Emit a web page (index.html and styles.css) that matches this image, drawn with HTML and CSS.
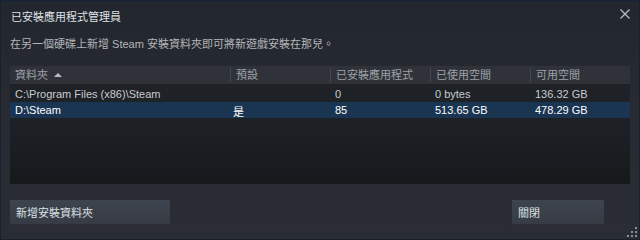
FILE: index.html
```html
<!DOCTYPE html>
<html lang="zh-Hant">
<head>
<meta charset="utf-8">
<title>已安裝應用程式管理員</title>
<link rel="stylesheet" href="styles.css">
</head>
<body>
<div class="window">
  <div class="titlebar">
    <div class="title">已安裝應用程式管理員</div>
    <button class="close" aria-label="關閉">
      <svg width="10" height="10" viewBox="0 0 10 10"><path d="M0.5 0.5 L9.5 9.5 M9.5 0.5 L0.5 9.5" stroke="#b9bcc0" stroke-width="1.3" fill="none"/></svg>
    </button>
  </div>
  <div class="subtitle">在另一個硬碟上新增 Steam 安裝資料夾即可將新遊戲安裝在那兒。</div>
  <div class="table">
    <div class="row head">
      <div class="cell first">資料夾 <span class="sort"></span></div>
      <div class="cell">預設</div>
      <div class="cell">已安裝應用程式</div>
      <div class="cell">已使用空間</div>
      <div class="cell">可用空間</div>
    </div>
    <div class="body">
      <div class="row">
        <div class="cell first">C:\Program Files (x86)\Steam</div>
        <div class="cell"></div>
        <div class="cell">0</div>
        <div class="cell">0 bytes</div>
        <div class="cell">136.32 GB</div>
      </div>
      <div class="row selected">
        <div class="cell first">D:\Steam</div>
        <div class="cell yes">是</div>
        <div class="cell">85</div>
        <div class="cell">513.65 GB</div>
        <div class="cell">478.29 GB</div>
      </div>
    </div>
  </div>
  <div class="actions">
    <button class="btn add">新增安裝資料夾</button>
    <button class="btn close-btn">關閉</button>
  </div>
  <div class="grip">
    <span></span><span></span><span></span><span></span><span></span><span></span>
  </div>
</div>
</body>
</html>
```

FILE: styles.css
```css
html, body {
  margin: 0;
  padding: 0;
  background: #2a2d33;
}
body {
  font-family: "Liberation Sans", "Noto Sans CJK TC", sans-serif;
  font-size: 11px;
}
.window {
  position: relative;
  width: 640px;
  height: 240px;
  box-sizing: border-box;
  border: 1px solid #18212e;
  border-top-color: #16223a;
  background: linear-gradient(to bottom, #22262e 0%, #272a31 40%, #2a2d33 100%);
  padding: 0 8px 0 9px;
  display: flex;
  flex-direction: column;
}
.titlebar {
  height: 33px;
  display: flex;
  justify-content: space-between;
  align-items: flex-start;
}
.title {
  color: #dfe1e3;
  line-height: 13px;
  margin-top: 10px;
  margin-left: 1px;
}
.close {
  border: 0;
  background: none;
  padding: 0;
  margin: 8px 1px 0 0;
  width: 10px;
  height: 10px;
  display: flex;
}
.subtitle {
  color: #b3b6b9;
  line-height: 14px;
  margin-top: 3px;
}
.table {
  margin-top: 15px;
  width: 620px;
  height: 118px;
  display: flex;
  flex-direction: column;
  background: linear-gradient(to bottom, #202328 0%, #1c1f23 60%, #16191c 100%);
}
.row {
  display: grid;
  grid-template-columns: 220px 100px 100px 100px 100px;
  height: 16px;
  line-height: 16px;
  color: #c8cbce;
}
.row.head {
  height: 18px;
  line-height: 18px;
  background: #2f3339;
  color: #9ea2a7;
}
.cell {
  padding-left: 5px;
  white-space: nowrap;
  overflow: hidden;
}
.head .cell {
  border-left: 1px solid #43474e;
  background-clip: content-box;
  padding-left: 5px;
}
.head .cell {
  border-image: linear-gradient(to bottom, transparent 3px, #43474e 3px, #43474e 15px, transparent 15px) 1;
}
.head .cell.first {
  border-left: 0;
  padding-left: 5px;
}
.sort {
  display: inline-block;
  width: 0;
  height: 0;
  border-left: 4px solid transparent;
  border-right: 4px solid transparent;
  border-bottom: 4px solid #b9bcc0;
  margin-left: 3px;
  vertical-align: 2px;
}
.body {
  padding-top: 2px;
}
.row.selected {
  background: #1a3552;
  color: #ffffff;
}
.cell.yes {
  padding-left: 3px;
  padding-top: 2px;
  line-height: 16px;
  height: 14px;
}
.actions {
  margin-top: 16px;
  width: 620px;
  display: flex;
  justify-content: space-between;
}
.btn {
  font-family: inherit;
  font-size: 11px;
  color: #dde2e6;
  border: 0;
  height: 24px;
  padding: 0 6px;
  text-align: left;
  background: linear-gradient(to bottom, #3e444e 0%, #363b44 100%);
}
.btn.add {
  width: 160px;
}
.btn.close-btn {
  width: 92px;
  margin-right: 26px;
}
.grip {
  position: absolute;
  right: 2px;
  bottom: 2px;
  width: 10px;
  height: 10px;
  display: grid;
  grid-template-columns: 2px 2px 2px;
  grid-template-rows: 2px 2px 2px;
  gap: 2px;
  grid-template-areas: ". . a" ". b c" "d e f";
}
.grip span {
  background: #8b8f95;
}
.grip span:nth-child(1) { grid-area: a; }
.grip span:nth-child(2) { grid-area: b; }
.grip span:nth-child(3) { grid-area: c; }
.grip span:nth-child(4) { grid-area: d; }
.grip span:nth-child(5) { grid-area: e; }
.grip span:nth-child(6) { grid-area: f; }
```
